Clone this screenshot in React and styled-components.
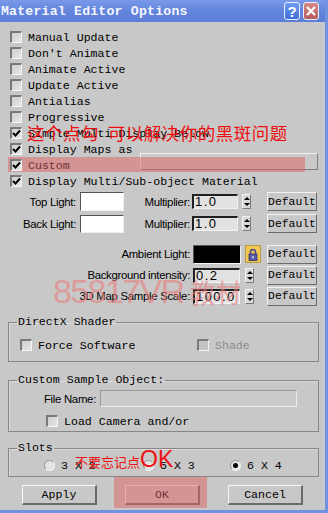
import React from 'react';
import styled, { createGlobalStyle } from 'styled-components';

const GlobalStyle = createGlobalStyle`
  body {
    margin: 0;
    background: #c8c8c8;
  }
`;

const Window = styled.div`
  position: relative;
  width: 328px;
  height: 513px;
  box-sizing: border-box;
  background: #c8c8c8;
  border-right: 3px solid #7092e2;
  border-bottom: 3px solid #7092e2;
  font-family: "Liberation Mono", monospace;
  font-size: 11.6px;
  color: #000;
  overflow: hidden;
`;

const TitleBar = styled.div`
  height: 22px;
  display: flex;
  align-items: center;
  background: linear-gradient(#7a9ae8, #6384dc 50%, #5c7fd8);
  padding: 0 6px 0 1px;
`;

const TitleText = styled.span`
  flex: 1;
  color: #f4f6ff;
  font-weight: bold;
  font-size: 13.2px;
  letter-spacing: 0.2px;
`;

const CapButton = styled.div`
  width: 16px;
  height: 18px;
  margin-left: ${p => p.$gap || 0}px;
  border-radius: 3px;
  border: 1px solid #e8eefc;
  box-sizing: border-box;
  display: flex;
  align-items: center;
  justify-content: center;
  color: #fff;
  font-family: "Liberation Sans", sans-serif;
  font-weight: bold;
  font-size: 15px;
  background: ${p => p.$red
    ? 'linear-gradient(#d88a8a, #b85a5e)'
    : 'linear-gradient(#6e9af0, #3f6ed8)'};
`;

const CheckList = styled.div`
  padding: 7px 0 0 10px;
  display: flex;
  flex-direction: column;
`;

const CheckRow = styled.div`
  position: relative;
  height: 16px;
  display: flex;
  align-items: center;
  gap: 6px;
  white-space: nowrap;
  color: ${p => p.$disabled ? '#8c8c8c' : '#000'};
`;

const Box = styled.span`
  position: relative;
  flex: none;
  width: 12px;
  height: 12px;
  box-sizing: border-box;
  border-top: 2px solid #7a7a7a;
  border-left: 2px solid #7a7a7a;
  border-bottom: 1px solid #f4f4f4;
  border-right: 1px solid #f4f4f4;
  background: ${p => p.$disabled ? '#c4c4c4' : 'linear-gradient(135deg, #cfcfcf, #e6e6e6)'};
  display: flex;
  align-items: center;
  justify-content: center;
`;

const RadioDot = styled.span`
  flex: none;
  width: 11px;
  height: 11px;
  border-radius: 50%;
  box-sizing: border-box;
  border: 1px solid #9a9a9a;
  border-bottom-color: #f2f2f2;
  border-right-color: #f2f2f2;
  background: #e4e4e4;
  display: flex;
  align-items: center;
  justify-content: center;
  &::after {
    content: '';
    width: 5px;
    height: 5px;
    border-radius: 50%;
    background: ${p => p.$on ? '#000' : 'transparent'};
  }
`;

const WideField = styled.span`
  margin-left: auto;
  margin-right: 7px;
  align-self: flex-start;
  margin-top: -4px;
  width: 178px;
  height: 17px;
  box-sizing: border-box;
  border-top: 1px solid #f0f0f0;
  border-left: 1px solid #f0f0f0;
  border-right: 1px solid #7c7c7c;
  border-bottom: 1px solid #7c7c7c;
  background: #c9c9c9;
`;

const Band = styled.div`
  position: absolute;
  left: -2px;
  top: 0;
  width: 297px;
  height: 15px;
  background: rgba(222, 96, 96, 0.5);
  pointer-events: none;
`;

const LightBlock = styled.div`
  margin-top: 3px;
  padding-left: 10px;
  display: flex;
  flex-direction: column;
  gap: 3px;
`;

const LightRow = styled.div`
  height: 19px;
  display: flex;
  align-items: center;
`;

const SansLabel = styled.span`
  width: ${p => p.$w}px;
  flex: none;
  text-align: right;
  font-family: "Liberation Sans", sans-serif;
  font-size: 11.4px;
  letter-spacing: -0.3px;
  white-space: nowrap;
`;

const Swatch = styled.span`
  flex: none;
  width: ${p => p.$w}px;
  height: ${p => p.$h}px;
  margin-left: ${p => p.$ml}px;
  box-sizing: border-box;
  border-top: 1px solid #555;
  border-left: 1px solid #555;
  border-right: 1px solid #f0f0f0;
  border-bottom: 1px solid #f0f0f0;
  background: ${p => p.$color};
`;

const NumField = styled.span`
  flex: none;
  width: ${p => p.$w}px;
  height: 15px;
  margin-left: ${p => p.$ml}px;
  box-sizing: border-box;
  border-top: 2px solid #202020;
  border-left: 2px solid #202020;
  border-right: 1px solid #f2f2f2;
  border-bottom: 1px solid #f2f2f2;
  background: #e2e2e2;
  font-family: "Liberation Sans", sans-serif;
  font-size: 13px;
  letter-spacing: 1.4px;
  line-height: 12px;
  padding-left: 1px;
  overflow: hidden;
  white-space: nowrap;
`;

const Spinner = styled.span`
  flex: none;
  width: 9px;
  height: 15px;
  margin-left: ${p => p.$ml || 4}px;
  box-sizing: border-box;
  border-top: 1px solid #f2f2f2;
  border-left: 1px solid #f2f2f2;
  border-right: 1px solid #7a7a7a;
  border-bottom: 1px solid #7a7a7a;
  background: #d8d8d8;
  display: flex;
  flex-direction: column;
  align-items: center;
  justify-content: space-between;
  padding: 2px 0;
  &::before, &::after {
    content: '';
    width: 0;
    height: 0;
    border-left: 3px solid transparent;
    border-right: 3px solid transparent;
  }
  &::before { border-bottom: 3px solid #000; }
  &::after { border-top: 3px solid #000; }
`;

const DefaultButton = styled.span`
  flex: none;
  margin-left: auto;
  margin-right: 8px;
  width: 50px;
  height: 19px;
  box-sizing: border-box;
  border-top: 1px solid #f4f4f4;
  border-left: 1px solid #f4f4f4;
  border-right: 1px solid #6c6c6c;
  border-bottom: 1px solid #6c6c6c;
  display: flex;
  align-items: center;
  justify-content: center;
  font-size: 11.4px;
`;

const AmbientBlock = styled.div`
  margin-top: 11px;
  padding-left: 10px;
  display: flex;
  flex-direction: column;
  gap: 1px;
`;

const AmbRow = styled.div`
  height: 20px;
  display: flex;
  align-items: center;
`;

const LockBox = styled.span`
  flex: none;
  width: 16px;
  height: 18px;
  margin-left: 4px;
  box-sizing: border-box;
  border: 1px solid #b89a40;
  background: #f0c858;
  display: flex;
  align-items: center;
  justify-content: center;
`;

const Group = styled.fieldset`
  margin: ${p => p.$mt}px 6px 0 8px;
  padding: ${p => p.$pt}px 0 ${p => p.$pb}px 11px;
  border: 1px solid #878787;
  box-shadow: inset 1px 1px 0 #dadada;
  min-width: 0;
`;

const Legend = styled.legend`
  padding: 0 1px;
  margin-left: -3px;
  line-height: 14px;
  font-size: 11.6px;
`;

const ShaderRow = styled.div`
  display: flex;
  height: 16px;
  align-items: center;
`;

const Cell = styled.div`
  width: ${p => p.$w}px;
  flex: none;
`;

const FileRow = styled.div`
  height: 17px;
  display: flex;
  align-items: center;
`;

const FileField = styled.span`
  width: 197px;
  height: 17px;
  margin-left: 4px;
  box-sizing: border-box;
  border-top: 1px solid #9a9a9a;
  border-left: 1px solid #9a9a9a;
  border-right: 1px solid #ececec;
  border-bottom: 1px solid #ececec;
  background: #cbcbcb;
`;

const CameraRow = styled.div`
  margin-top: 6px;
  padding-left: 26px;
`;

const SlotsRow = styled.div`
  height: 16px;
  display: flex;
  align-items: center;
  padding-left: 24px;
`;

const SlotItem = styled.div`
  width: ${p => p.$w}px;
  flex: none;
  display: flex;
  align-items: center;
  gap: 6px;
  white-space: nowrap;
`;

const ButtonBar = styled.div`
  margin-top: 8px;
  padding-left: 22px;
  display: flex;
  gap: 28px;
`;

const PushButton = styled.span`
  width: 75px;
  height: 20px;
  box-sizing: border-box;
  border-top: 1px solid #f6f6f6;
  border-left: 1px solid #f6f6f6;
  border-right: 2px solid #6a6a6a;
  border-bottom: 2px solid #6a6a6a;
  display: flex;
  align-items: center;
  justify-content: center;
  font-size: 11.6px;
`;

const Note = styled.div`
  position: absolute;
  left: ${p => p.$x}px;
  top: ${p => p.$y}px;
  color: #ee1010;
  font-family: "Noto Sans CJK SC", sans-serif;
  font-size: ${p => p.$size}px;
  letter-spacing: ${p => p.$ls || 0}px;
  line-height: 1;
  white-space: nowrap;
  pointer-events: none;
`;

const NoteLatin = styled.span`
  font-family: "Liberation Sans", sans-serif;
  font-size: 23px;
  letter-spacing: 0;
`;

const Watermark = styled.div`
  position: absolute;
  left: 53px;
  top: 274px;
  color: rgba(236, 120, 120, 0.58);
  font-family: "Liberation Sans", sans-serif;
  font-size: 34px;
  letter-spacing: -1.6px;
  line-height: 1;
  white-space: nowrap;
  pointer-events: none;
`;

const WatermarkCjk = styled.span`
  font-family: "Noto Sans CJK SC", sans-serif;
  font-size: 26px;
  letter-spacing: 0;
  margin-left: 6px;
`;

const Overlay = styled.div`
  position: absolute;
  left: 114px;
  top: 477px;
  width: 93px;
  height: 31px;
  background: rgba(222, 96, 96, 0.5);
  pointer-events: none;
`;

const Tick = () => (
  <svg width="9" height="9" viewBox="0 0 9 9">
    <path d="M1 4 L3.5 6.5 L8 1.5" fill="none" stroke="#000" strokeWidth="2" />
  </svg>
);

const Check = ({ on, disabled, children }) => (
  <CheckRow $disabled={disabled}>
    <Box $disabled={disabled}>{on && <Tick />}</Box>
    {children}
  </CheckRow>
);

const Lock = () => (
  <svg width="10" height="13" viewBox="0 0 10 13">
    <path d="M2.5 6 V4 a2.5 2.5 0 0 1 5 0 V6" fill="none" stroke="#4a4a8c" strokeWidth="1.6" />
    <rect x="1" y="6" width="8" height="6.5" fill="#5a5aa6" stroke="#34346c" strokeWidth="0.8" />
    <rect x="4.3" y="8" width="1.4" height="2.5" fill="#d8d8f0" />
  </svg>
);

const checks = [
  ['Manual Update', false],
  ["Don't Animate", false],
  ['Animate Active', false],
  ['Update Active', false],
  ['Antialias', false],
  ['Progressive', false],
  ['Simple Multi Display Below', true],
  ['Display Maps as', true],
];

export default function App() {
  return (
    <Window>
      <GlobalStyle />
      <TitleBar>
        <TitleText>Material Editor Options</TitleText>
        <CapButton>?</CapButton>
        <CapButton $red $gap={3}>
          <svg width="12" height="12" viewBox="0 0 12 12">
            <path d="M2 2 L10 10 M10 2 L2 10" stroke="#fff" strokeWidth="2.2" />
          </svg>
        </CapButton>
      </TitleBar>

      <CheckList>
        {checks.map(([label, on]) => (
          <Check key={label} on={on}>{label}</Check>
        ))}
        <CheckRow>
          <Band />
          <Box><Tick /></Box>
          Custom
          <WideField />
        </CheckRow>
        <Check on>Display Multi/Sub-object Material</Check>
      </CheckList>

      <LightBlock>
        <LightRow>
          <SansLabel $w={66}>Top Light:</SansLabel>
          <Swatch $w={44} $h={19} $ml={4} $color="#fff" />
          <SansLabel $w={66}>Multiplier:</SansLabel>
          <NumField $w={46} $ml={2}>1.0</NumField>
          <Spinner />
          <DefaultButton>Default</DefaultButton>
        </LightRow>
        <LightRow>
          <SansLabel $w={66}>Back Light:</SansLabel>
          <Swatch $w={44} $h={18} $ml={4} $color="#fff" />
          <SansLabel $w={66}>Multiplier:</SansLabel>
          <NumField $w={46} $ml={2}>1.0</NumField>
          <Spinner />
          <DefaultButton>Default</DefaultButton>
        </LightRow>
      </LightBlock>

      <AmbientBlock>
        <AmbRow>
          <SansLabel $w={180}>Ambient Light:</SansLabel>
          <Swatch $w={48} $h={19} $ml={3} $color="#000" />
          <LockBox><Lock /></LockBox>
          <DefaultButton>Default</DefaultButton>
        </AmbRow>
        <AmbRow>
          <SansLabel $w={180}>Background intensity:</SansLabel>
          <NumField $w={47} $ml={3}>0.2</NumField>
          <Spinner $ml={5} />
          <DefaultButton>Default</DefaultButton>
        </AmbRow>
        <AmbRow>
          <SansLabel $w={180}>3D Map Sample Scale:</SansLabel>
          <NumField $w={47} $ml={3}>100.0</NumField>
          <Spinner $ml={5} />
          <DefaultButton>Default</DefaultButton>
        </AmbRow>
      </AmbientBlock>

      <Group $mt={9} $pt={8} $pb={8}>
        <Legend>DirectX Shader</Legend>
        <ShaderRow>
          <Cell $w={177}><Check>Force Software</Check></Cell>
          <Cell $w={100}><Check disabled>Shade</Check></Cell>
        </ShaderRow>
      </Group>

      <Group $mt={11} $pt={3} $pb={2}>
        <Legend>Custom Sample Object:</Legend>
        <FileRow>
          <SansLabel $w={76}>File Name:</SansLabel>
          <FileField />
        </FileRow>
        <CameraRow>
          <Check>Load Camera and/or</Check>
        </CameraRow>
      </Group>

      <Group $mt={9} $pt={2} $pb={3}>
        <Legend>Slots</Legend>
        <SlotsRow>
          <SlotItem $w={99}><RadioDot />3 X 2</SlotItem>
          <SlotItem $w={87}><RadioDot />5 X 3</SlotItem>
          <SlotItem $w={60}><RadioDot $on />6 X 4</SlotItem>
        </SlotsRow>
      </Group>

      <ButtonBar>
        <PushButton>Apply</PushButton>
        <PushButton>OK</PushButton>
        <PushButton>Cancel</PushButton>
      </ButtonBar>

      <Note $x={27} $y={124} $size={17.5} $ls={0.5}>这个点勾&nbsp;&nbsp;可以解决你的黑斑问题</Note>
      <Note $x={75} $y={448} $size={13}>不要忘记点<NoteLatin>OK</NoteLatin></Note>
      <Watermark>85817VR<WatermarkCjk>教材</WatermarkCjk></Watermark>
      <Overlay />
    </Window>
  );
}
